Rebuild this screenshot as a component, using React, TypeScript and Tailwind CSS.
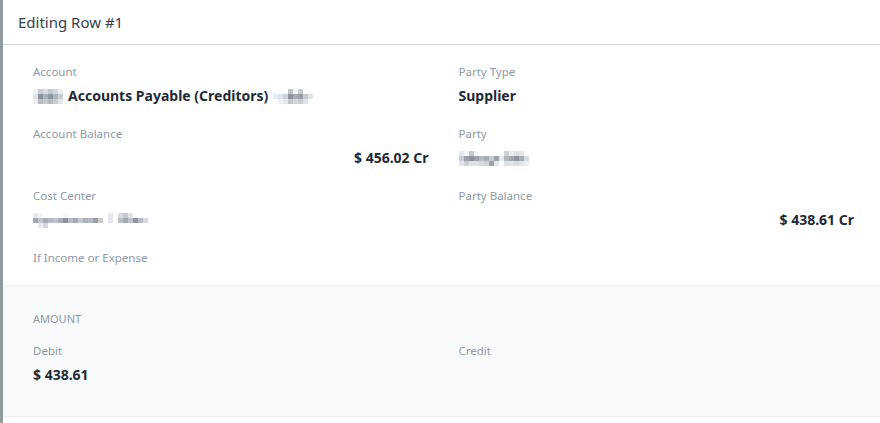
import React from 'react';

const font = { fontFamily: '"Noto Sans", "Open Sans", sans-serif' };

// pixelated (redacted) text, rows of grey cells
function Mosaic({ rows }: { rows: string[][] }) {
    return (
        <span className="inline-flex flex-col align-middle">
            {rows.map((row, r) => (
                <span key={r} className="flex">
                    {row.map((c, i) => (
                        <span key={i} className={`h-[5px] w-[5px] ${c}`} />
                    ))}
                </span>
            ))}
        </span>
    );
}

function Field({ label, children, right }: { label: string; children?: React.ReactNode; right?: boolean }) {
    return (
        <div className="flex flex-col">
            <div className="text-[11.5px] leading-[18px] text-[#8d99a6]">{label}</div>
            {children !== undefined && (
                <div className={`mt-[5px] flex h-[20px] items-center text-[14px] font-bold leading-[20px] text-[#1f2a36] ${right ? 'justify-end' : ''}`}>
                    {children}
                </div>
            )}
        </div>
    );
}

const W = 'bg-[#ffffff]';

export default function App() {
    return (
        <div className="flex min-h-screen bg-white" style={font}>
            <div className="w-[3px] shrink-0 bg-[#8e9aa0]" />
            <div className="flex-1">
                {/* Header */}
                <div className="flex h-[45px] items-center border-b border-[#d1d8dd] px-[15px] text-[15px] text-[#36414c]">
                    Editing Row #1
                </div>

                {/* Details */}
                <div className="grid grid-cols-2 gap-x-[30px] border-b border-[#ebeef0] pl-[30px] pr-[26px] pt-[18px] pb-[18px]">
                    <div className="flex flex-col gap-[19px]">
                        <Field label="Account">
                            <span className="flex items-center gap-[5px]">
                                <Mosaic
                                    rows={[
                                        ['bg-[#eef0f3]', 'bg-[#c8ccd2]', 'bg-[#d9dce0]', 'bg-[#c2c8cf]', 'bg-[#d2d5da]', 'bg-[#e9ebee]'],
                                        ['bg-[#dfe2e6]', 'bg-[#8d939a]', 'bg-[#a9b0b8]', 'bg-[#8e97a1]', 'bg-[#b0b5bb]', 'bg-[#c8cdd2]'],
                                        ['bg-[#eceef1]', 'bg-[#b5bac0]', 'bg-[#c6cad0]', 'bg-[#b3bac2]', 'bg-[#c9cdd2]', 'bg-[#e3e6e9]'],
                                    ]}
                                />
                                <span>Accounts Payable (Creditors)</span>
                                <Mosaic
                                    rows={[
                                        [W, W, W, 'bg-[#c1c5cb]', 'bg-[#f4f5f7]', 'bg-[#c7cbd0]', W, W],
                                        ['bg-[#e7eaee]', 'bg-[#dfe3e8]', 'bg-[#c9d3dd]', 'bg-[#8e949c]', 'bg-[#a6acb3]', 'bg-[#979ea6]', 'bg-[#c6cbd1]', 'bg-[#dfe3e7]'],
                                        [W, 'bg-[#eef0f2]', 'bg-[#e3e7eb]', 'bg-[#c4c8ce]', 'bg-[#d3d6da]', 'bg-[#c8ccd1]', 'bg-[#e1e4e7]', W],
                                    ]}
                                />
                            </span>
                        </Field>
                        <Field label="Account Balance" right>
                            $ 456.02 Cr
                        </Field>
                        <Field label="Cost Center">
                            <Mosaic
                                rows={[
                                    ['bg-[#e6e8eb]', 'bg-[#f3f4f6]', W, W, W, W, 'bg-[#f6f6f7]', W, W, W, W, W, W, W, W, 'bg-[#e7e9ec]', W, 'bg-[#d9dde2]', 'bg-[#c4c8cd]', 'bg-[#e2e5e8]', W, W, W, W],
                                    ['bg-[#a2a8b1]', 'bg-[#bfc4ca]', 'bg-[#a7aeb7]', 'bg-[#b3b9c0]', 'bg-[#c0c5cb]', 'bg-[#a9b0b8]', 'bg-[#8b949e]', 'bg-[#b8bdc3]', 'bg-[#a4abb3]', 'bg-[#c3c8ce]', 'bg-[#acb3bb]', 'bg-[#b7bcc2]', 'bg-[#999fa6]', 'bg-[#c8ccd1]', W, 'bg-[#e3e6ea]', W, 'bg-[#b9bec4]', 'bg-[#a3aab2]', 'bg-[#c0c5cb]', 'bg-[#8f969f]', 'bg-[#b8bec4]', 'bg-[#d9dde1]', W],
                                    [W, 'bg-[#e9ebee]', 'bg-[#d4d8dd]', W, W, W, W, W, W, W, W, W, W, W, W, W, W, W, W, W, W, W, W, W],
                                ]}
                            />
                        </Field>
                        <Field label="If Income or Expense" />
                    </div>
                    <div className="flex flex-col gap-[19px]">
                        <Field label="Party Type">Supplier</Field>
                        <Field label="Party">
                            <Mosaic
                                rows={[
                                    ['bg-[#e8ebee]', 'bg-[#f3f4f6]', 'bg-[#c4c9cf]', 'bg-[#f5f5f6]', W, W, W, W, W, 'bg-[#cfd3d8]', 'bg-[#e9ebee]', 'bg-[#dee2e7]', 'bg-[#e4e6e9]', W],
                                    ['bg-[#c8cdd3]', 'bg-[#9aa1a9]', 'bg-[#8a929b]', 'bg-[#9ba2aa]', 'bg-[#b5bac0]', 'bg-[#a8afb7]', 'bg-[#c6cbd0]', 'bg-[#9aa1a9]', 'bg-[#e5e7ea]', 'bg-[#b1b7be]', 'bg-[#a1a8b0]', 'bg-[#8f969e]', 'bg-[#a9afb6]', 'bg-[#d6d9dd]'],
                                    ['bg-[#e3e6ea]', 'bg-[#cdd2d8]', 'bg-[#dfe2e6]', 'bg-[#e0e3e7]', 'bg-[#d6dade]', 'bg-[#cfd3d8]', 'bg-[#9aa1a9]', 'bg-[#e4e6e9]', W, 'bg-[#dde0e4]', 'bg-[#e1e4e8]', 'bg-[#d9dce0]', 'bg-[#e2e5e8]', 'bg-[#eceef0]'],
                                ]}
                            />
                        </Field>
                        <Field label="Party Balance" right>
                            $ 438.61 Cr
                        </Field>
                    </div>
                </div>

                {/* Amount */}
                <div className="border-b border-[#ebeef0] bg-[#f9fafb] pl-[30px] pr-[26px] pt-[25px] pb-[31px]">
                    <div className="text-[11px] uppercase leading-[16px] text-[#8d99a6]">Amount</div>
                    <div className="mt-[15px] grid grid-cols-2 gap-x-[30px]">
                        <Field label="Debit">$ 438.61</Field>
                        <Field label="Credit" />
                    </div>
                </div>
            </div>
        </div>
    );
}
